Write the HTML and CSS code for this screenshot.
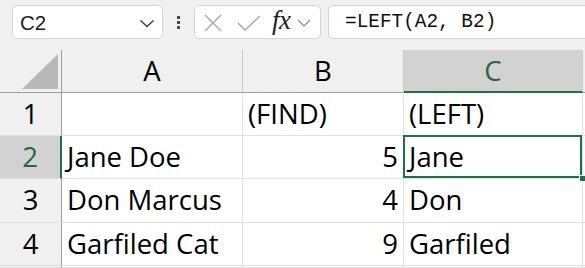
FILE: index.html
```html
<!DOCTYPE html>
<html>
<head>
<meta charset="utf-8">
<link rel="stylesheet" href="styles.css">
</head>
<body>
<div class="app">
  <div class="toolbar">
    <div class="namebox">
      <span class="name">C2</span>
      <svg class="chev-dark" width="16" height="9" viewBox="0 0 16 9"><polyline points="1.5,1.5 8,7.5 14.5,1.5" fill="none" stroke="#444" stroke-width="1.6"/></svg>
    </div>
    <div class="grip"><i></i><i></i><i></i></div>
    <div class="fxtools">
      <svg class="ico-x" width="20" height="20" viewBox="0 0 20 20"><path d="M2 2 L18 18 M18 2 L2 18" stroke="#a8a8a8" stroke-width="1.4" fill="none"/></svg>
      <svg class="ico-check" width="24" height="18" viewBox="0 0 24 18"><polyline points="1,9 8,16 23,2" fill="none" stroke="#a8a8a8" stroke-width="1.4"/></svg>
      <span class="fx">fx</span>
      <svg class="chev-light" width="14" height="8" viewBox="0 0 14 8"><polyline points="1,1 7,7 13,1" fill="none" stroke="#9a9a9a" stroke-width="1.5"/></svg>
    </div>
    <div class="formula">=LEFT(A2, B2)</div>
  </div>
  <div class="sheet">
    <div class="hd corner"><svg width="36" height="35" viewBox="0 0 36 35"><polygon points="36,0 36,35 0,35" fill="#b8b8b8"/></svg></div>
    <div class="hd col">A</div>
    <div class="hd col">B</div>
    <div class="hd col sel">C</div>
    <div class="hd col"></div>

    <div class="rh">1</div>
    <div class="cell"></div>
    <div class="cell">(FIND)</div>
    <div class="cell">(LEFT)</div>
    <div class="cell"></div>

    <div class="rh sel">2</div>
    <div class="cell">Jane Doe</div>
    <div class="cell num">5</div>
    <div class="cell active">Jane<span class="selbox"></span><span class="handle"></span></div>
    <div class="cell"></div>

    <div class="rh">3</div>
    <div class="cell">Don Marcus</div>
    <div class="cell num">4</div>
    <div class="cell">Don</div>
    <div class="cell"></div>

    <div class="rh">4</div>
    <div class="cell">Garfiled Cat</div>
    <div class="cell num">9</div>
    <div class="cell">Garfiled</div>
    <div class="cell"></div>

    <div class="rh last"></div>
    <div class="cell last"></div>
    <div class="cell last"></div>
    <div class="cell last"></div>
    <div class="cell last"></div>
  </div>
</div>
</body>
</html>
```
FILE: styles.css
```css
* { box-sizing: border-box; }
html, body { margin: 0; padding: 0; }
body {
  background: #f0f0f0;
  width: 585px;
  height: 268px;
  overflow: hidden;
  font-family: "Open Sans", "Liberation Sans", sans-serif;
}
.app { display: flex; flex-direction: column; height: 268px; overflow: hidden; }

.toolbar {
  height: 50px;
  flex: none;
  display: flex;
  align-items: flex-start;
  padding: 5px 0 0 12px;
}
.namebox {
  width: 151px;
  height: 34px;
  background: #fff;
  border: 1px solid #d4d4d4;
  border-radius: 5px;
  display: flex;
  align-items: center;
  justify-content: space-between;
  padding: 0 7px 0 7px;
}
.name {
  font-family: "Liberation Sans", Arial, sans-serif;
  font-size: 20.5px;
  color: #1a1a1a;
  margin-top: 1px;
}
.chev-dark { margin-top: 2px; }
.grip {
  width: 31px;
  height: 34px;
  display: flex;
  flex-direction: column;
  align-items: center;
  justify-content: center;
  gap: 2px;
}
.grip i {
  display: block;
  width: 3px;
  height: 3px;
  background: #4a4a4a;
}
.fxtools {
  width: 127px;
  height: 34px;
  background: #fff;
  border: 1px solid #d4d4d4;
  border-radius: 5px;
  display: flex;
  align-items: center;
  padding-left: 8px;
}
.ico-x { margin-top: 1px; }
.ico-check { margin-left: 14px; margin-top: 1px; }
.fx {
  font-family: "Liberation Serif", "Times New Roman", serif;
  font-style: italic;
  font-size: 27px;
  color: #222;
  margin-left: 11px;
  letter-spacing: -0.5px;
  margin-top: -3px;
}
.chev-light { margin-left: 6px; margin-top: 2px; }
.formula {
  flex: 1;
  margin-left: 7px;
  margin-right: -10px;
  height: 34px;
  background: #fff;
  border: 1px solid #d4d4d4;
  border-radius: 5px;
  padding-left: 16px;
  font-family: "Liberation Mono", "DejaVu Sans Mono", monospace;
  font-size: 19.4px;
  line-height: 32px;
  color: #111;
}

.sheet {
  flex: 1;
  min-height: 0;
  display: grid;
  grid-template-columns: 62px 181px 161px 179px 1fr;
  grid-template-rows: 43px 43px 43px 44px 43px 1fr;
  background: #fff;
  overflow: hidden;
}
.hd {
  background: #f0f0f0;
  border-right: 1px solid #c9c9c9;
  border-bottom: 1px solid #9e9e9e;
}
.hd.corner {
  display: flex;
  align-items: flex-end;
  justify-content: flex-end;
  padding: 0 3px 3px 0;
  border-right: 1px solid #9e9e9e;
}
.col, .rh, .cell {
  font-size: 27.5px;
  line-height: 42px;
  color: #000;
  white-space: nowrap;
}
.col { text-align: center; }
.hd.sel {
  background: #d2d2d2;
  color: #1e6b40;
  border-bottom: 2px solid #1e7145;
}
.rh {
  background: #f0f0f0;
  text-align: center;
  border-right: 1px solid #9e9e9e;
  border-bottom: 1px solid #e0e0e0;
}
.rh.sel {
  background: #d2d2d2;
  color: #1e6b40;
  border-right: 2px solid #1e7145;
}
.cell {
  border-right: 1px solid #e1e1e1;
  border-bottom: 1px solid #e1e1e1;
  padding: 0 5px 0 5px;
}
.last { line-height: 0; min-height: 0; }
.cell.num { text-align: right; }
.cell.active { position: relative; }
.selbox {
  position: absolute;
  left: -1px;
  top: -1px;
  right: 0;
  bottom: 0;
  border: 2px solid #1e7145;
}
.handle {
  position: absolute;
  right: -4px;
  bottom: -4px;
  width: 7px;
  height: 7px;
  background: #1e7145;
  border: 1px solid #fff;
}
```
